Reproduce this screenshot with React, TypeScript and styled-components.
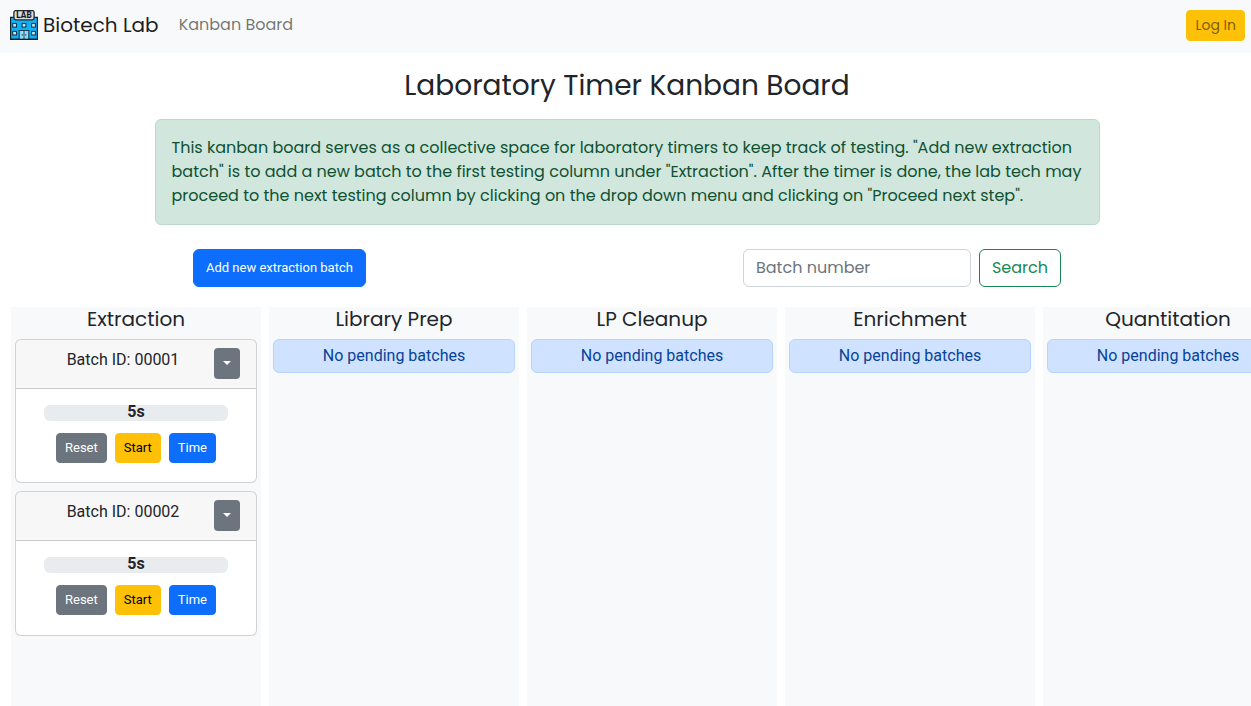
import React from "react";
import styled, { createGlobalStyle, css } from "styled-components";

const GlobalStyle = createGlobalStyle`
  *, *::before, *::after { box-sizing: border-box; }
  html, body { margin: 0; padding: 0; overflow: hidden; }
  body {
    background: #fff;
    color: #212529;
    font-family: Poppins, Inter, "Open Sans", sans-serif;
    font-size: 16px;
    line-height: 1.5;
  }
`;

const Page = styled.div`
  display: flex;
  flex-direction: column;
  width: 100vw;
  height: 100vh;
  overflow: hidden;
`;

const Navbar = styled.nav`
  display: flex;
  align-items: flex-start;
  flex: none;
  height: 53px;
  padding: 10px 6px 0 9px;
  background: #f8f9fa;
`;

const Brand = styled.a`
  display: flex;
  align-items: center;
  gap: 4px;
  margin-right: 20px;
  font-size: 20px;
  line-height: 30px;
  color: rgba(0, 0, 0, 0.9);
  white-space: nowrap;
`;

const NavLink = styled.a`
  flex: 1;
  padding-top: 3px;
  color: rgba(0, 0, 0, 0.55);
`;

const roboto = css`
  font-family: Roboto, "Liberation Sans", sans-serif;
`;

const palette = {
  primary: { bg: "#0d6efd", fg: "#fff" },
  warning: { bg: "#ffc107", fg: "#000" },
  secondary: { bg: "#6c757d", fg: "#fff" },
};

const Button = styled.button<{ $tone: keyof typeof palette; $large?: boolean }>`
  ${roboto}
  font-size: 13px;
  font-weight: ${(p) => (p.$tone === "warning" ? 400 : 450)};
  line-height: 19.5px;
  padding: ${(p) => (p.$large ? "0 12px" : "4px 8px")};
  ${(p) => p.$large && "height: 38px;"}
  border: 1px solid ${(p) => palette[p.$tone].bg};
  border-radius: ${(p) => (p.$large ? 6 : 4)}px;
  background: ${(p) => palette[p.$tone].bg};
  color: ${(p) => palette[p.$tone].fg};
  white-space: nowrap;
`;

const LoginButton = styled.button`
  height: 31px;
  padding: 4px 8px;
  border: 1px solid #ffc107;
  border-radius: 4px;
  background: #ffc107;
  color: rgba(0, 0, 0, 0.55);
  font-family: inherit;
  font-size: 14px;
  line-height: 21px;
`;

const Title = styled.h1`
  margin: 16px 0;
  padding-left: 3px;
  font-size: 28px;
  font-weight: 400;
  line-height: 34px;
  text-align: center;
`;

const Notice = styled.div`
  flex: none;
  width: 945px;
  height: 106px;
  margin-left: 155px;
  padding: 16px 15.5px;
  border: 1px solid #badbcc;
  border-radius: 6px;
  background: #d1e7dd;
  color: #0f5132;
  white-space: nowrap;
`;

const Line = styled.span`
  display: block;
`;

const Controls = styled.div`
  display: flex;
  justify-content: space-between;
  flex: none;
  margin: 24px 190px 20px 193px;
`;

const SearchForm = styled.form`
  display: flex;
  gap: 8px;
`;

const SearchInput = styled.input`
  width: 228px;
  height: 38px;
  padding: 5px 12px 7px;
  border: 1px solid #ced4da;
  border-radius: 6px;
  background: #fff;
  font: inherit;
  &::placeholder { color: #6c757d; opacity: 1; }
`;

const SearchButton = styled.button`
  width: 82px;
  height: 38px;
  padding: 0;
  border: 1px solid #198754;
  border-radius: 6px;
  background: #fff;
  color: #198754;
  font: inherit;
`;

const Board = styled.main`
  display: flex;
  flex: 1;
  gap: 8px;
  padding-left: 11px;
`;

const Column = styled.section`
  display: flex;
  flex-direction: column;
  gap: 8px;
  flex: none;
  width: 250px;
  padding: 0 4px;
  background: #f8f9fa;
`;

const ColumnTitle = styled.h2`
  margin: 0;
  font-size: 20px;
  font-weight: 400;
  line-height: 24px;
  text-align: center;
`;

const EmptyState = styled.div`
  ${roboto}
  height: 34px;
  padding: 4px;
  border: 1px solid #b6d4fe;
  border-radius: 6px;
  background: #cfe2ff;
  color: #084298;
  line-height: 24px;
  text-align: center;
`;

const Card = styled.article`
  ${roboto}
  border: 1px solid rgba(0, 0, 0, 0.175);
  border-radius: 6px;
  background: #fff;
`;

const CardHeader = styled.header`
  display: flex;
  padding: 8px 16px 9px;
  border-bottom: 1px solid rgba(0, 0, 0, 0.175);
  border-radius: 5px 5px 0 0;
  background: rgba(0, 0, 0, 0.03);
`;

const BatchId = styled.span`
  flex: 1;
  line-height: 24px;
  text-align: center;
`;

const MenuToggle = styled.button`
  display: flex;
  align-items: center;
  justify-content: center;
  width: 26px;
  height: 31px;
  padding: 0;
  border: 0;
  border-radius: 4px;
  background: #6c757d;
  &::after {
    content: "";
    margin-top: -2px;
    border-top: 4px solid #fff;
    border-left: 4px solid transparent;
    border-right: 4px solid transparent;
  }
`;

const CardBody = styled.div`
  display: flex;
  flex-direction: column;
  gap: 12px;
  padding: 16px 28px 19.8px;
`;

const TimerBar = styled.div`
  height: 16px;
  border-radius: 6px;
  background: #e9ecef;
  font-weight: 700;
  line-height: 13px;
  text-align: center;
`;

const Actions = styled.div`
  display: flex;
  justify-content: center;
  gap: 8px;
`;

const LabLogo = () => (
  <svg width="30" height="30" viewBox="0 0 30 30">
    <path d="M1.6 7.4h26.8v21.9H1.6z" fill="#0cb1f8" stroke="#10222e" strokeWidth="1.2" />
    <rect x="4.9" y=".7" width="20.2" height="9.2" rx="1.8" fill="#d9dde0" stroke="#20262b" strokeWidth="1.3" />
    <text x="15" y="8.3" textAnchor="middle" fontFamily="Roboto, sans-serif" fontSize="8.2" fontWeight="800" fill="#15191c">
      LAB
    </text>
    <g fill="#c4edff" stroke="#173848" strokeWidth="1.1">
      <rect x="3.7" y="13.5" width="3.8" height="3.6" />
      <rect x="13.1" y="13.5" width="3.8" height="3.6" />
      <rect x="22.6" y="13.5" width="3.8" height="3.6" />
      <rect x="3.7" y="21.4" width="3.8" height="3.6" />
      <rect x="22.6" y="21.4" width="3.8" height="3.6" />
    </g>
    <path d="M10.2 29.3v-8.8h9.6v8.8" fill="#8edcfb" stroke="#173848" strokeWidth="1.1" />
    <path d="M15 20.5v8.8M13.2 24v1.6M16.8 24v1.6" stroke="#173848" strokeWidth=".9" />
    <path d="M1 29.3h28" stroke="#10222e" strokeWidth="1.3" />
  </svg>
);

const BatchCard = ({ id }: { id: string }) => (
  <Card>
    <CardHeader>
      <BatchId>Batch ID: {id}</BatchId>
      <MenuToggle aria-label="Batch menu" />
    </CardHeader>
    <CardBody>
      <TimerBar>5s</TimerBar>
      <Actions>
        <Button $tone="secondary">Reset</Button>
        <Button $tone="warning">Start</Button>
        <Button $tone="primary">Time</Button>
      </Actions>
    </CardBody>
  </Card>
);

const columns: { name: string; batches: string[] }[] = [
  { name: "Extraction", batches: ["00001", "00002"] },
  { name: "Library Prep", batches: [] },
  { name: "LP Cleanup", batches: [] },
  { name: "Enrichment", batches: [] },
  { name: "Quantitation", batches: [] },
];

export default function App() {
  return (
    <Page>
      <GlobalStyle />
      <Navbar>
        <Brand>
          <LabLogo />
          Biotech Lab
        </Brand>
        <NavLink>Kanban Board</NavLink>
        <LoginButton>Log In</LoginButton>
      </Navbar>
      <Title>Laboratory Timer Kanban Board</Title>
      <Notice>
        <Line>This kanban board serves as a collective space for laboratory timers to keep track of testing. "Add new extraction</Line>
        <Line>batch" is to add a new batch to the first testing column under "Extraction". After the timer is done, the lab tech may</Line>
        <Line>proceed to the next testing column by clicking on the drop down menu and clicking on "Proceed next step".</Line>
      </Notice>
      <Controls>
        <Button $tone="primary" $large>Add new extraction batch</Button>
        <SearchForm>
          <SearchInput placeholder="Batch number" />
          <SearchButton type="button">Search</SearchButton>
        </SearchForm>
      </Controls>
      <Board>
        {columns.map((column) => (
          <Column key={column.name}>
            <ColumnTitle>{column.name}</ColumnTitle>
            {column.batches.length === 0 && <EmptyState>No pending batches</EmptyState>}
            {column.batches.map((id) => (
              <BatchCard key={id} id={id} />
            ))}
          </Column>
        ))}
      </Board>
    </Page>
  );
}
